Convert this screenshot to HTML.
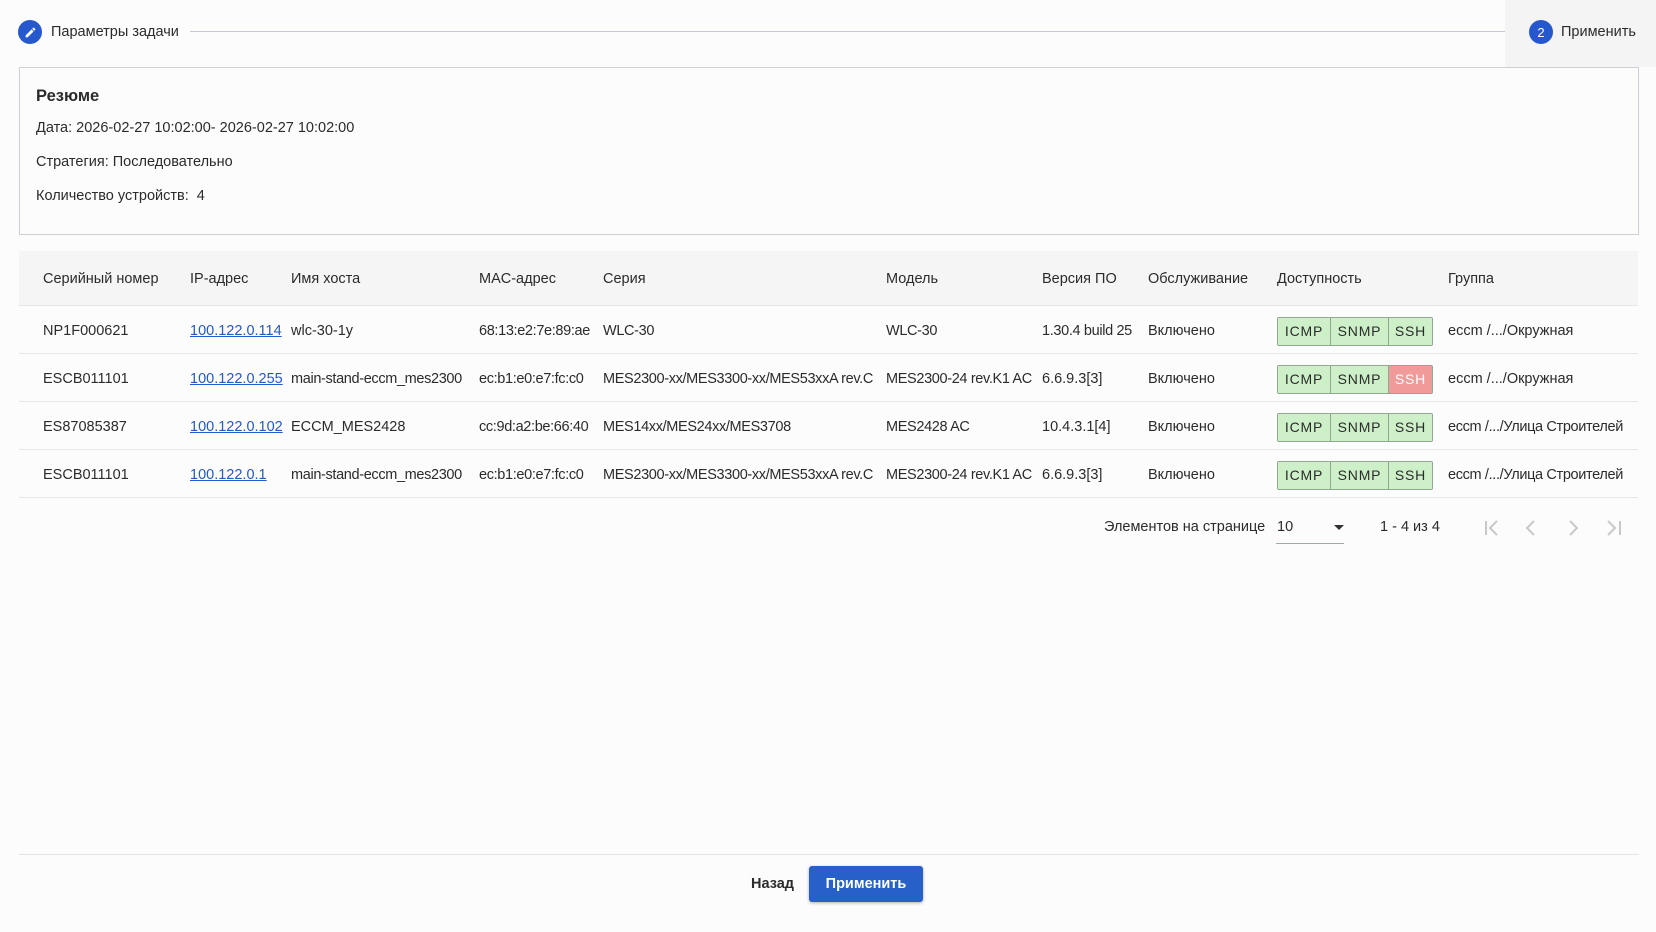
<!DOCTYPE html>
<html><head><meta charset="utf-8"><style>
*{margin:0;padding:0;box-sizing:border-box}
body{width:1656px;height:932px;background:#fcfcfc;font-family:"Liberation Sans",sans-serif;font-size:14.5px;color:#2b2b2b;position:relative;overflow:hidden}
.a{position:absolute;white-space:nowrap}
.c{position:absolute;width:24px;height:24px;border-radius:50%;background:#2458cc;color:#fff;display:flex;align-items:center;justify-content:center;font-size:13px}
.row{position:absolute;left:19px;width:1619px;height:48px;border-bottom:1px solid #e6e6e6}
.row span{position:absolute;top:17px;white-space:nowrap}
.row span.s{letter-spacing:-0.35px}
.lnk{color:#2458cc;text-decoration:underline}
.bd{position:absolute;left:1258px;top:11px;height:29px;display:flex;border:1px solid #8fa88f;border-radius:2px;overflow:hidden}
.bd i{font-style:normal;background:#cdf0c9;border-right:1px solid #8fa88f;display:flex;align-items:center;justify-content:center;letter-spacing:.8px;font-size:14px;padding-bottom:2px}
.bd i:last-child{border-right:none}
.bd i.r{background:#f09a9a;color:#fff}
</style></head><body>
<div class="c" style="left:18px;top:20px"><svg width="13" height="13" viewBox="0 0 24 24"><path d="M3 17.25V21h3.75L17.81 9.94l-3.75-3.75L3 17.25zM20.71 7.04a1 1 0 000-1.41l-2.34-2.34a1 1 0 00-1.41 0l-1.83 1.83 3.75 3.75 1.83-1.83z" fill="#fff"/></svg></div>
<div class="a" style="left:51px;top:24px">Параметры задачи</div>
<div class="a" style="left:190px;top:31px;width:1315px;height:1px;background:#c8c8d4"></div>
<div class="a" style="left:1505px;top:0;width:151px;height:67px;background:#f4f4f4"></div>
<div class="c" style="left:1529px;top:20px">2</div>
<div class="a" style="left:1561px;top:24px">Применить</div>

<div class="a" style="left:19px;top:67px;width:1620px;height:168px;border:1px solid #cfcfd8;background:#fcfcfc"></div>
<div class="a" style="left:36px;top:87px;font-size:16.5px;font-weight:bold">Резюме</div>
<div class="a" style="left:36px;top:120px">Дата: 2026-02-27 10:02:00- 2026-02-27 10:02:00</div>
<div class="a" style="left:36px;top:154px">Стратегия: Последовательно</div>
<div class="a" style="left:36px;top:188px">Количество устройств:&nbsp; 4</div>

<div class="row" style="top:251px;height:55px;background:#f5f5f5;border-bottom:1px solid #e6e6e6">
<span style="left:24px;top:20px">Серийный номер</span><span style="left:171px;top:20px">IP-адрес</span><span style="left:272px;top:20px">Имя хоста</span><span style="left:460px;top:20px">MAC-адрес</span><span style="left:584px;top:20px">Серия</span><span style="left:867px;top:20px">Модель</span><span style="left:1023px;top:20px">Версия ПО</span><span style="left:1129px;top:20px">Обслуживание</span><span style="left:1258px;top:20px">Доступность</span><span style="left:1429px;top:20px">Группа</span></div>

<div class="row" style="top:306px"><span style="left:24px">NP1F000621</span><span style="left:171px" class="lnk">100.122.0.114</span><span style="left:272px">wlc-30-1y</span><span style="left:460px" class="s">68:13:e2:7e:89:ae</span><span style="left:584px" class="s">WLC-30</span><span style="left:867px" class="s">WLC-30</span><span style="left:1023px" class="s">1.30.4 build 25</span><span style="left:1129px">Включено</span><div class="bd"><i style="width:53px">ICMP</i><i style="width:58px">SNMP</i><i style="width:43px">SSH</i></div><span style="left:1429px">eccm /.../Окружная</span></div>
<div class="row" style="top:354px"><span style="left:24px">ESCB011101</span><span style="left:171px" class="lnk">100.122.0.255</span><span style="left:272px" class="s">main-stand-eccm_mes2300</span><span style="left:460px" class="s">ec:b1:e0:e7:fc:c0</span><span style="left:584px" class="s">MES2300-xx/MES3300-xx/MES53xxA rev.C</span><span style="left:867px" class="s">MES2300-24 rev.K1 AC</span><span style="left:1023px">6.6.9.3[3]</span><span style="left:1129px">Включено</span><div class="bd"><i style="width:53px">ICMP</i><i style="width:58px">SNMP</i><i class="r" style="width:43px">SSH</i></div><span style="left:1429px">eccm /.../Окружная</span></div>
<div class="row" style="top:402px"><span style="left:24px">ES87085387</span><span style="left:171px" class="lnk">100.122.0.102</span><span style="left:272px">ECCM_MES2428</span><span style="left:460px" class="s">cc:9d:a2:be:66:40</span><span style="left:584px" class="s">MES14xx/MES24xx/MES3708</span><span style="left:867px" class="s">MES2428 AC</span><span style="left:1023px">10.4.3.1[4]</span><span style="left:1129px">Включено</span><div class="bd"><i style="width:53px">ICMP</i><i style="width:58px">SNMP</i><i style="width:43px">SSH</i></div><span style="left:1429px" class="s">eccm /.../Улица Строителей</span></div>
<div class="row" style="top:450px"><span style="left:24px">ESCB011101</span><span style="left:171px" class="lnk">100.122.0.1</span><span style="left:272px" class="s">main-stand-eccm_mes2300</span><span style="left:460px" class="s">ec:b1:e0:e7:fc:c0</span><span style="left:584px" class="s">MES2300-xx/MES3300-xx/MES53xxA rev.C</span><span style="left:867px" class="s">MES2300-24 rev.K1 AC</span><span style="left:1023px">6.6.9.3[3]</span><span style="left:1129px">Включено</span><div class="bd"><i style="width:53px">ICMP</i><i style="width:58px">SNMP</i><i style="width:43px">SSH</i></div><span style="left:1429px" class="s">eccm /.../Улица Строителей</span></div>

<div class="a" style="left:1104px;top:519px">Элементов на странице</div>
<div class="a" style="left:1277px;top:519px">10</div>
<div class="a" style="left:1334px;top:525px;border-left:5px solid transparent;border-right:5px solid transparent;border-top:5px solid #333"></div>
<div class="a" style="left:1276px;top:543px;width:68px;height:1px;background:#9aa"></div>
<div class="a" style="left:1380px;top:519px">1 - 4 из 4</div>
<svg class="a" style="left:1480px;top:515px" width="150" height="26" viewBox="0 0 150 26" fill="none" stroke="#c8c8c8" stroke-width="2"><path d="M6 6v14M17 6l-7 7 7 7"/><path d="M54 6l-7 7 7 7"/><path d="M90 6l7 7-7 7"/><path d="M128 6l7 7-7 7M140 6v14"/></svg>

<div class="a" style="left:19px;top:854px;width:1620px;height:1px;background:#e4e4e4"></div>
<div class="a" style="left:751px;top:876px;font-weight:bold">Назад</div>
<div class="a" style="left:809px;top:866px;width:114px;height:36px;background:#2760c8;border-radius:3px;color:#fff;font-weight:bold;display:flex;align-items:center;justify-content:center;box-shadow:0 1px 3px rgba(0,0,0,.3)">Применить</div>
</body></html>
